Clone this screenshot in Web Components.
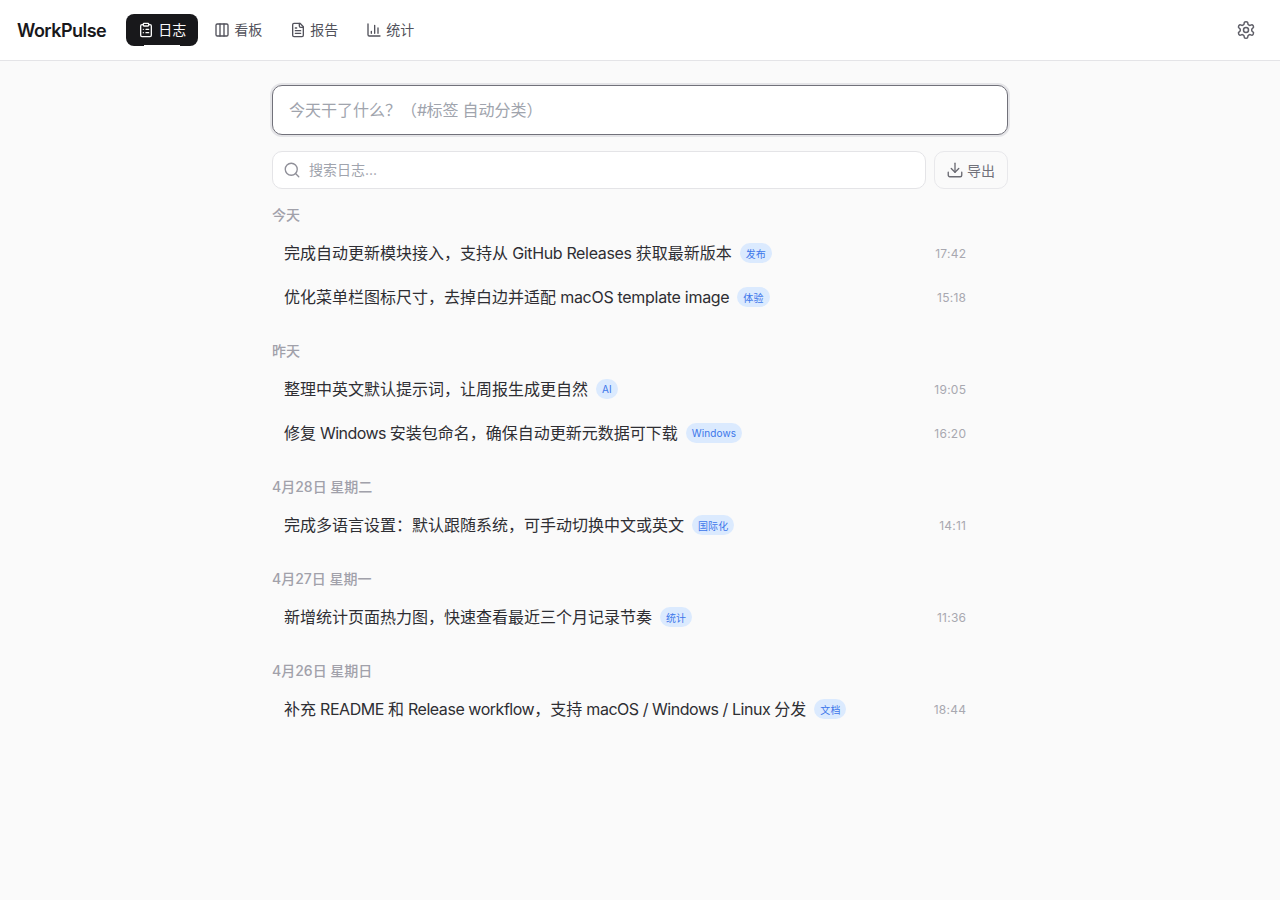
<!doctype html>
<html lang="zh-CN"><head><meta charset="utf-8">
<style>
html,body{margin:0;height:100%;}
body{background:#fafafa;font-family:Inter,"Noto Sans CJK SC",sans-serif;color:#18181b;}
</style></head><body>
<template id="t-l"><style>:host{display:inline;letter-spacing:var(--ls,-.35px)}</style><slot></slot></template>
<template id="t-nav"><style>
:host{display:inline-flex;align-items:center;gap:4px;height:32px;padding:0 12px;border-radius:8px;font-size:14px;color:#52525b;position:relative;box-sizing:border-box}
:host([active]){background:#18181b;color:#fafafa}
:host([active])::after{content:"";position:absolute;left:18px;right:18px;bottom:0;height:1px;background:#fff}
.x{padding-bottom:2px}
</style><slot name="icon"></slot><span class="x"><slot></slot></span></template>
<template id="t-bar"><style>
:host{display:flex;align-items:center;height:60px;padding:0 16px;background:#fff;border-bottom:1px solid #e4e4e7;}
.brand{font-size:18px;font-weight:600;color:#18181b;margin-right:20px;letter-spacing:-.53px;padding-left:1px}
nav{display:flex;gap:4px;align-items:center;flex:1}
.gear{width:36px;height:36px;display:flex;align-items:center;justify-content:center;color:#5f5f68}
svg{width:20px;height:20px;fill:none;stroke:currentColor;stroke-width:1.8;stroke-linecap:round;stroke-linejoin:round}
</style><span class="brand">WorkPulse</span><nav><slot></slot></nav>
<span class="gear"><svg viewBox="0 0 24 24"><path d="M12.22 2h-.44a2 2 0 0 0-2 2v.18a2 2 0 0 1-1 1.73l-.43.25a2 2 0 0 1-2 0l-.15-.08a2 2 0 0 0-2.73.73l-.22.38a2 2 0 0 0 .73 2.73l.15.1a2 2 0 0 1 1 1.72v.51a2 2 0 0 1-1 1.74l-.15.09a2 2 0 0 0-.73 2.73l.22.38a2 2 0 0 0 2.73.73l.15-.08a2 2 0 0 1 2 0l.43.25a2 2 0 0 1 1 1.73V20a2 2 0 0 0 2 2h.44a2 2 0 0 0 2-2v-.18a2 2 0 0 1 1-1.73l.43-.25a2 2 0 0 1 2 0l.15.08a2 2 0 0 0 2.73-.73l.22-.39a2 2 0 0 0-.73-2.73l-.15-.08a2 2 0 0 1-1-1.74v-.5a2 2 0 0 1 1-1.74l.15-.09a2 2 0 0 0 .73-2.73l-.22-.38a2 2 0 0 0-2.73-.73l-.15.08a2 2 0 0 1-2 0l-.43-.25a2 2 0 0 1-1-1.73V4a2 2 0 0 0-2-2z"/><circle cx="12" cy="12" r="3"/></svg></span></template>
<template id="t-compose"><style>
:host{height:50px;box-sizing:border-box;background:#fff;border:1px solid #71717a;border-radius:10px;box-shadow:0 0 0 2px #e4e4e7;padding:0 16px 2px;display:flex;align-items:center;font-size:16px;color:#a0a4ad}
</style><span><slot></slot></span></template>
<template id="t-tools"><style>
:host{display:flex;gap:8px;height:38px;margin-top:16px}
.s{flex:1;display:flex;align-items:center;gap:8px;background:#fff;border:1px solid #e4e4e7;border-radius:10px;padding:0 12px 2px 10px;font-size:14px;color:#a0a4ad}
.b{display:flex;align-items:center;justify-content:center;gap:3px;width:74px;box-sizing:border-box;border:1px solid #e8e8eb;border-radius:10px;font-size:14px;color:#71717a;padding:0 1px 1px 0}
svg{fill:none;stroke:currentColor;stroke-width:1.8;stroke-linecap:round;stroke-linejoin:round;display:block}
</style><div class="s"><svg width="18" height="18" viewBox="0 0 24 24" style="color:#8f8f98;margin-top:2px"><circle cx="11" cy="11" r="8"/><path d="m21 21-4.3-4.3"/></svg>搜索日志...</div>
<div class="b"><svg width="18" height="18" viewBox="0 0 24 24" style="color:#6b6b73;margin-top:1px"><path d="M12 15V3"/><path d="M21 15v4a2 2 0 0 1-2 2H5a2 2 0 0 1-2-2v-4"/><path d="m7 10 5 5 5-5"/></svg>导出</div></template>
<template id="t-day"><style>
:host{display:block;margin-bottom:22px}
h3{margin:0 0 6px;font-size:14px;font-weight:500;line-height:20px;color:#a1a1aa}
</style><h3></h3><slot></slot></template>
<template id="t-row"><style>
:host{display:flex;align-items:center;height:44px;padding:0 42px 0 12px;font-size:16px;color:#2e2e33;box-sizing:border-box}
.x{padding-bottom:2px}
.tag{margin-left:8px;height:20px;padding:0 6px;min-width:8px;border-radius:10px;background:#dbeafe;color:#3b76ea;font-size:10px;letter-spacing:.1px;display:flex;align-items:center}
.t{margin-left:auto;font-size:12px;color:#a8a8b0;letter-spacing:.25px;margin-right:-.25px}
</style><span class="x"><slot></slot></span><span class="tag"></span><span class="t"></span></template>
<template id="t-main"><style>
:host{display:block;width:736px;margin:24px auto 0}
.list{margin-top:16px}
</style><slot name="top"></slot><div class="list"><slot></slot></div></template>

<wp-bar>
<wp-nav active><svg slot="icon" viewBox="0 0 24 24" width="16" height="16" fill="none" stroke="currentColor" stroke-width="2" stroke-linecap="round" stroke-linejoin="round"><rect width="8" height="4" x="8" y="2" rx="1"/><path d="M16 4h2a2 2 0 0 1 2 2v14a2 2 0 0 1-2 2H6a2 2 0 0 1-2-2V6a2 2 0 0 1 2-2h2"/><path d="M12 11h4M12 16h4M8 11h.01M8 16h.01"/></svg>日志</wp-nav>
<wp-nav><svg slot="icon" viewBox="0 0 24 24" width="16" height="16" fill="none" stroke="currentColor" stroke-width="2" stroke-linecap="round" stroke-linejoin="round"><rect width="18" height="18" x="3" y="3" rx="2"/><path d="M9 3v18M15 3v18"/></svg>看板</wp-nav>
<wp-nav><svg slot="icon" viewBox="0 0 24 24" width="16" height="16" fill="none" stroke="currentColor" stroke-width="2" stroke-linecap="round" stroke-linejoin="round"><path d="M15 2H6a2 2 0 0 0-2 2v16a2 2 0 0 0 2 2h12a2 2 0 0 0 2-2V7Z"/><path d="M14 2v4a2 2 0 0 0 2 2h4"/><path d="M10 9H8M16 13H8M16 17H8"/></svg>报告</wp-nav>
<wp-nav><svg slot="icon" viewBox="0 0 24 24" width="16" height="16" fill="none" stroke="currentColor" stroke-width="2" stroke-linecap="round" stroke-linejoin="round"><path d="M3 3v16a2 2 0 0 0 2 2h16"/><path d="M18 17V9M13 17V5M8 17v-3"/></svg>统计</wp-nav>
</wp-bar>
<wp-main>
<wp-compose slot="top">今天干了什么？（<wp-l style="--ls:-.6px">#</wp-l>标签<wp-l style="--ls:-.6px"> </wp-l>自动分类）</wp-compose>
<wp-tools slot="top"></wp-tools>
<wp-day label="今天">
<wp-row tag="发布" time="17:42">完成自动更新模块接入，支持从<wp-l> GitHub Releases </wp-l>获取最新版本</wp-row>
<wp-row tag="体验" time="15:18">优化菜单栏图标尺寸，去掉白边并适配<wp-l style="--ls:-.3px"> macOS template image</wp-l></wp-row>
</wp-day>
<wp-day label="昨天">
<wp-row tag="AI" time="19:05">整理中英文默认提示词，让周报生成更自然</wp-row>
<wp-row tag="Windows" time="16:20">修复<wp-l style="--ls:-.55px"> Windows </wp-l>安装包命名，确保自动更新元数据可下载</wp-row>
</wp-day>
<wp-day label="4月28日 星期二">
<wp-row tag="国际化" time="14:11">完成多语言设置：默认跟随系统，可手动切换中文或英文</wp-row>
</wp-day>
<wp-day label="4月27日 星期一">
<wp-row tag="统计" time="11:36">新增统计页面热力图，快速查看最近三个月记录节奏</wp-row>
</wp-day>
<wp-day label="4月26日 星期日">
<wp-row tag="文档" time="18:44">补充<wp-l style="--ls:-.46px"> README </wp-l>和<wp-l style="--ls:-.46px"> Release workflow</wp-l>，支持<wp-l style="--ls:-.46px"> macOS / Windows / Linux </wp-l>分发</wp-row>
</wp-day>
</wp-main>
<script>
function def(name,tpl,init){customElements.define(name,class extends HTMLElement{constructor(){super();const r=this.attachShadow({mode:"open"});r.appendChild(document.getElementById(tpl).content.cloneNode(true));}connectedCallback(){if(init)init(this,this.shadowRoot);}});}
def("wp-l","t-l");def("wp-nav","t-nav");def("wp-bar","t-bar");def("wp-compose","t-compose");def("wp-tools","t-tools");def("wp-main","t-main");
def("wp-day","t-day",(e,r)=>{r.querySelector("h3").textContent=e.getAttribute("label");});
def("wp-row","t-row",(e,r)=>{r.querySelector(".tag").textContent=e.getAttribute("tag");r.querySelector(".t").textContent=e.getAttribute("time");});
</script>
</body></html>
